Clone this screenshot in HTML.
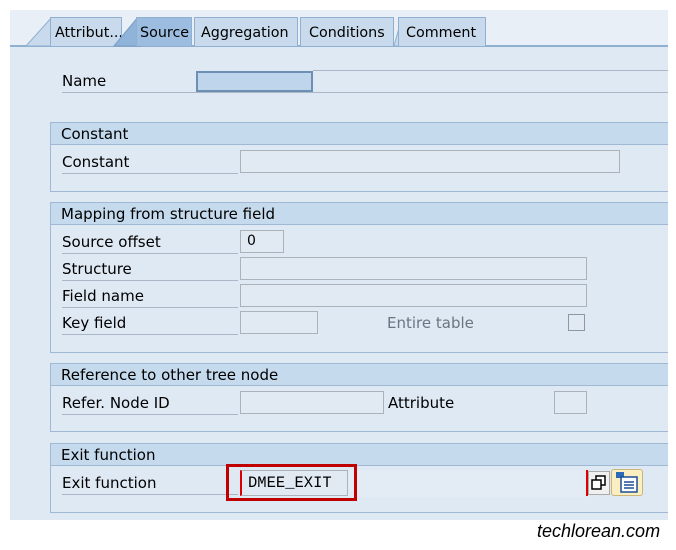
<!DOCTYPE html>
<html><head><style>
*{margin:0;padding:0;box-sizing:border-box}
body{width:676px;height:550px;background:#fff;position:relative;overflow:hidden;font-family:"DejaVu Sans","Liberation Sans",sans-serif;font-size:14px;color:#000}
.a{position:absolute}
.panel{left:10px;top:10px;width:658px;height:510px;background:#dfe9f4}
.tabbar{left:10px;top:10px;width:658px;height:36px;background:#e9eff6}
.tab{position:absolute;top:17px;height:29px;background:#c8daec;border:1px solid #8fb0d0;border-bottom:none;line-height:30px;font-size:14.3px;padding-left:4px;white-space:nowrap;overflow:hidden}
.lbl{position:absolute;left:62px;height:24px;line-height:24px;font-size:15px;border-bottom:1px solid #a9b7c6}
.inp{position:absolute;height:22px;border:1px solid #aab2ba;background:#e1eaf3;font-size:14px;padding-left:6px;line-height:19px}
.grp{position:absolute;left:50px;width:618px;border:1px solid #9fb8d3;border-right:none}
.gh{height:22px;background:#c6daed;border-bottom:1px solid #9fb8d3;font-size:15px;line-height:23px;padding-left:10px}
</style></head><body>
<div class="a panel"></div>
<div class="a tabbar"></div>
<div class="a" style="left:10px;top:45px;width:658px;height:2px;background:#8fb0d0"></div>
<svg class="a" style="left:20px;top:17px" width="40" height="30"><polygon points="6,29 32,0 40,0 40,29" fill="#c8daec" stroke="#8fb0d0"/></svg>
<div class="tab" style="left:50px;width:72px">Attribut...</div>
<svg class="a" style="left:112px;top:17px" width="30" height="30"><polygon points="2,29 26,0 30,0 30,29" fill="#8fb3d9" stroke="#7a9cc4"/></svg>
<div class="tab" style="left:136px;width:56px;background:#9cbde0;padding-left:3px">Source</div>
<div class="tab" style="left:194px;width:104px;padding-left:6px">Aggregation</div>
<div class="tab" style="left:300px;width:94px;padding-left:8px">Conditions</div>
<svg class="a" style="left:392px;top:17px" width="12" height="30"><polygon points="2,29 10,0 12,0 12,29" fill="#c8daec" stroke="#8fb0d0"/></svg>
<div class="tab" style="left:398px;width:88px;padding-left:7px">Comment</div>

<div class="lbl" style="top:69px;width:606px">Name</div>
<div class="inp" style="left:196px;top:71px;width:117px;height:21px;background:#bed5eb;border:2px solid #6d8fb3"></div>
<div class="a" style="left:313px;top:70px;width:355px;height:1px;background:#a9b7c6"></div>

<div class="grp" style="top:122px;height:70px"><div class="gh">Constant</div></div>
<div class="lbl" style="top:150px;width:176px">Constant</div>
<div class="inp" style="left:240px;top:150px;width:380px;height:23px"></div>

<div class="grp" style="top:202px;height:151px"><div class="gh">Mapping from structure field</div></div>
<div class="lbl" style="top:230px;width:176px">Source offset</div>
<div class="inp" style="left:240px;top:230px;width:44px;height:23px;line-height:21px">0</div>
<div class="lbl" style="top:257px;width:176px">Structure</div>
<div class="inp" style="left:240px;top:257px;width:347px;height:23px"></div>
<div class="lbl" style="top:284px;width:176px">Field name</div>
<div class="inp" style="left:240px;top:284px;width:347px;height:23px"></div>
<div class="lbl" style="top:311px;width:176px">Key field</div>
<div class="inp" style="left:240px;top:311px;width:78px;height:23px"></div>
<div class="a" style="left:387px;top:311px;line-height:24px;font-size:15px;color:#6b7580">Entire table</div>
<div class="a" style="left:568px;top:314px;width:17px;height:17px;border:1px solid #8d98a3;background:#e1eaf3"></div>

<div class="grp" style="top:363px;height:69px"><div class="gh">Reference to other tree node</div></div>
<div class="lbl" style="top:391px;width:176px">Refer. Node ID</div>
<div class="inp" style="left:240px;top:391px;width:144px;height:23px"></div>
<div class="a" style="left:388px;top:391px;line-height:24px;font-size:15px">Attribute</div>
<div class="inp" style="left:554px;top:391px;width:33px;height:23px"></div>

<div class="grp" style="top:443px;height:70px"><div class="gh">Exit function</div></div>
<div class="lbl" style="top:471px;width:176px">Exit function</div>
<div class="a" style="left:240px;top:470px;width:347px;height:27px;background:#e3ecf5"></div>
<div class="inp" style="left:240px;top:470px;width:108px;height:26px;font-family:'Liberation Mono',monospace;font-size:15.5px;line-height:25px;border-left:2px solid #d00">DMEE_EXIT</div>
<div class="a" style="left:226px;top:464px;width:131px;height:37px;border:3px solid #c00000"></div>
<div class="a" style="left:586px;top:470px;width:2px;height:26px;background:#d00"></div>
<div class="a" style="left:588px;top:471px;width:22px;height:24px;background:#f0f0f0;border:1px solid #aaa"></div>
<svg class="a" style="left:590px;top:474px" width="18" height="18"><rect x="6" y="2" width="9" height="9" fill="#fff" stroke="#000" stroke-width="1.5"/><rect x="2" y="6" width="9" height="9" fill="#fff" stroke="#000" stroke-width="1.5"/></svg>
<div class="a" style="left:611px;top:469px;width:32px;height:27px;background:#fbeec0;border:1px solid #c9b47a;border-radius:3px"></div>
<svg class="a" style="left:614px;top:471px" width="26" height="23"><rect x="2" y="1" width="8" height="6" fill="#2a6ab8"/><rect x="7" y="6" width="16" height="15" fill="#fff" stroke="#1a4f95" stroke-width="1.5"/><line x1="10" y1="11" x2="20" y2="11" stroke="#1a4f95" stroke-width="1.5"/><line x1="10" y1="14" x2="20" y2="14" stroke="#1a4f95" stroke-width="1.5"/><line x1="10" y1="17" x2="20" y2="17" stroke="#1a4f95" stroke-width="1.5"/></svg>

<div class="a" style="left:537px;top:521px;font-family:'Liberation Sans',sans-serif;font-style:italic;font-size:18px">techlorean.com</div>
</body></html>
